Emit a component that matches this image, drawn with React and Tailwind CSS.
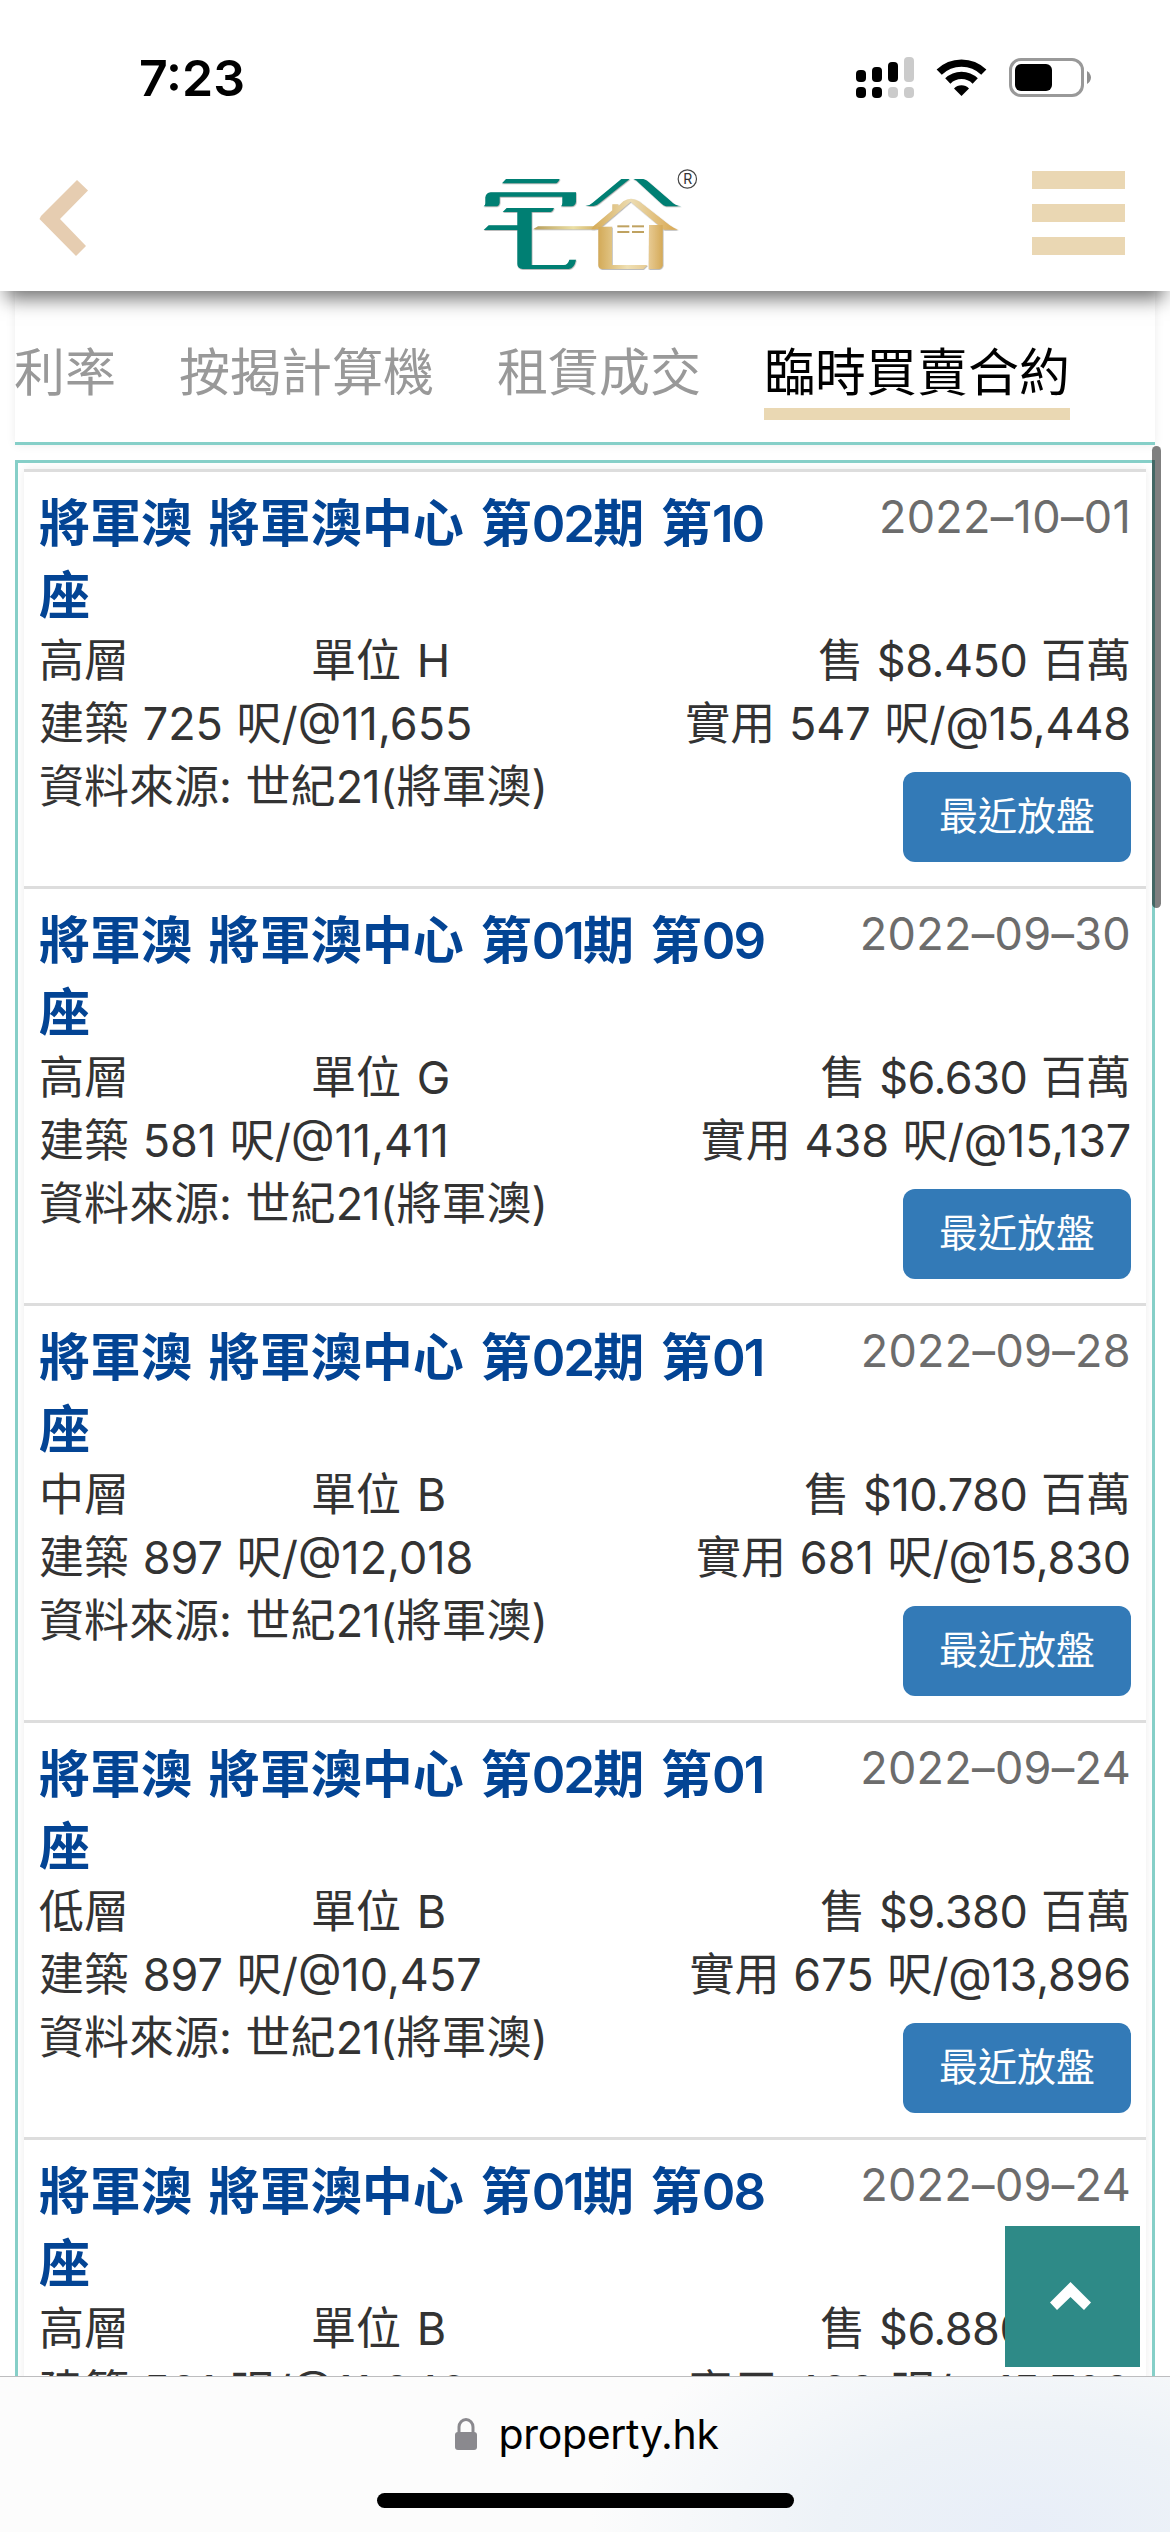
import React from "react";

const tabs = ["利率", "按揭計算機", "租賃成交", "臨時買賣合約"];

const records = [
    { phase: "02", block: "10", date: "2022–10–01", floor: "高層", unit: "H", price: "8.450", gross: "725", grossRate: "11,655", net: "547", netRate: "15,448" },
    { phase: "01", block: "09", date: "2022–09–30", floor: "高層", unit: "G", price: "6.630", gross: "581", grossRate: "11,411", net: "438", netRate: "15,137" },
    { phase: "02", block: "01", date: "2022–09–28", floor: "中層", unit: "B", price: "10.780", gross: "897", grossRate: "12,018", net: "681", netRate: "15,830" },
    { phase: "02", block: "01", date: "2022–09–24", floor: "低層", unit: "B", price: "9.380", gross: "897", grossRate: "10,457", net: "675", netRate: "13,896" },
    { phase: "01", block: "08", date: "2022–09–24", floor: "高層", unit: "B", price: "6.880", gross: "581", grossRate: "11,842", net: "438", netRate: "15,708" },
];

function StatusBar() {
    return (
        <div className="flex h-[150px] items-start justify-between pl-[139px] pr-[79px]">
            <span className="mt-[48px] text-[50px] leading-[60px] font-semibold text-black">7:23</span>
            <div className="mt-[57px] flex items-start">
                <svg width="58" height="41" viewBox="0 0 58 41">
                    <rect x="0" y="13" width="10" height="12" rx="4" fill="#000" />
                    <rect x="16" y="10" width="10" height="15" rx="4" fill="#000" />
                    <rect x="32" y="5" width="10" height="20" rx="4" fill="#000" />
                    <rect x="48" y="0" width="10" height="25" rx="4" fill="#cbcbcb" />
                    <rect x="0" y="30" width="10" height="11" rx="4" fill="#000" />
                    <rect x="16" y="30" width="10" height="11" rx="4" fill="#000" />
                    <rect x="32" y="30" width="10" height="11" rx="4" fill="#cbcbcb" />
                    <rect x="48" y="30" width="10" height="11" rx="4" fill="#cbcbcb" />
                </svg>
                <svg className="mt-[2px] ml-[22px]" width="51" height="37" viewBox="0 0 51 37">
                    <path d="M3.2 13.2 A32 32 0 0 1 47.8 13.2" fill="none" stroke="#000" strokeWidth="7.4" />
                    <path d="M11.8 22 A19.5 19.5 0 0 1 39.2 22" fill="none" stroke="#000" strokeWidth="7.4" />
                    <path d="M18 29.5 A10.5 10.5 0 0 1 33 29.5 L25.5 37 Z" fill="#000" />
                </svg>
                <svg className="mt-[1px] ml-[22px]" width="82" height="39" viewBox="0 0 82 39">
                    <rect x="1.5" y="1.5" width="72" height="36" rx="10.5" fill="none" stroke="#999" strokeWidth="3" />
                    <rect x="6" y="6" width="37" height="27" rx="6" fill="#000" />
                    <path d="M78 13 C80.5 14.5 82 17 82 19.5 C82 22 80.5 24.5 78 26 Z" fill="#8f8f8f" />
                </svg>
            </div>
        </div>
    );
}

function Logo() {
    return (
        <svg width="260" height="140" viewBox="0 0 780 420">
            <defs>
                <linearGradient id="roof" x1="400" y1="0" x2="650" y2="0" gradientUnits="userSpaceOnUse">
                    <stop offset="0" stopColor="#d6ac58" />
                    <stop offset="0.45" stopColor="#ecdcb2" />
                    <stop offset="1" stopColor="#d9a851" />
                </linearGradient>
                <linearGradient id="beam" x1="220" y1="0" x2="420" y2="0" gradientUnits="userSpaceOnUse">
                    <stop offset="0" stopColor="#b79c58" />
                    <stop offset="0.6" stopColor="#ece0a4" />
                    <stop offset="1" stopColor="#cfaa5a" />
                </linearGradient>
                <linearGradient id="wall" x1="415" y1="0" x2="608" y2="0" gradientUnits="userSpaceOnUse">
                    <stop offset="0" stopColor="#d3aa58" />
                    <stop offset="0.45" stopColor="#efe0b4" />
                    <stop offset="0.8" stopColor="#e6c88f" />
                    <stop offset="1" stopColor="#d5aa58" />
                </linearGradient>
                <filter id="edge" x="-5%" y="-5%" width="110%" height="110%">
                    <feDropShadow dx="1.5" dy="2" stdDeviation="1.2" floodColor="#333" floodOpacity="0.5" />
                </filter>
            </defs>
            <g fill="#007f73" filter="url(#edge)">
                <path d="M138 87 H299 Q294 99 287 100 H126 Z" />
                <path d="M92 127 H348 V155 Q346 168 334 169 H303 Q307 165 307 158 V140 H119 V158 Q118 169 106 169 H71 Q76 166 76 160 V142 Q78 129 92 127 Z" />
                <path d="M140 174 H282 Q278 185 272 186 H215 V345 H312 Q324 344 328 329 H348 Q343 355 326 357 H188 Q172 355 172 342 V240 H71 L86 226 H172 V186 H128 Z" />
                <path d="M484 87 H509 L418 160 Q410 168 400 168 H376 Q390 166 397 159 Z" />
                <path d="M520 87 H550 Q560 90 566 96 L633 154 Q645 167 664 169 H618 Q610 167 603 160 L536 98 Q530 90 520 87 Z" />
            </g>
            <g filter="url(#edge)">
                <path d="M234 229 H412 L405 238 H219 Z" fill="url(#beam)" />
                <path d="M400 229 L457 181 V163 H475 V168 L490 154 Q512 138 537 154 L628 225 Q640 234 654 239 H612 L512 155 L421 233 Q415 238 405 238 H394 Z" fill="url(#roof)" />
                <path d="M415 230 H456 V345 H562 L550 357 H426 Q415 355 415 346 Z" fill="url(#wall)" />
                <path d="M567 225 H608 V346 Q606 357 595 357 H566 Z" fill="url(#wall)" />
            </g>
            <g fill="#bfa260">
                <rect x="472" y="226" width="36" height="6" />
                <rect x="516" y="226" width="36" height="6" />
                <rect x="472" y="243" width="36" height="6" />
                <rect x="516" y="243" width="36" height="6" />
            </g>
            <circle cx="682" cy="87" r="27.5" fill="none" stroke="#444" strokeWidth="3.5" />
            <text x="683" y="102" textAnchor="middle" fontSize="42" fill="#333">R</text>
        </svg>
    );
}

function Header() {
    return (
        <header className="relative z-10 h-[291px] shrink-0 bg-white shadow-[0_14px_18px_-6px_rgba(0,0,0,0.55)]">
            <StatusBar />
            <div className="flex items-start justify-between pl-[39px] pr-[45px]">
                <svg className="mt-[30px]" width="50" height="77" viewBox="0 0 50 77">
                    <path d="M38 0 L49 10.5 L21 39 L47 66 L37 76 L0.5 39 L2 36 Z" fill="#e6cdb1" />
                </svg>
                <div className="-mr-[59px] h-[140px]">
                    <Logo />
                </div>
                <div className="mt-[21px] flex w-[93px] flex-col gap-[15px]">
                    <div className="h-[18px] bg-[#ead7b3]"></div>
                    <div className="h-[18px] bg-[#ead7b3]"></div>
                    <div className="h-[18px] bg-[#ead7b3]"></div>
                </div>
            </div>
        </header>
    );
}

function Tabs() {
    return (
        <nav className="mx-[15px] h-[154px] shrink-0 border-b-[3px] border-[#86cfc8] bg-white shadow-[0_0_9px_rgba(0,0,0,0.08)]">
            <div className="-ml-[1px] flex gap-[63px] pt-[46px]">
                {tabs.map((tab) => (
                    <div
                        key={tab}
                        className={
                            tab === "臨時買賣合約"
                                ? "h-[83px] border-b-[12px] border-[#ead8b3] text-[51px] leading-[72px] whitespace-nowrap text-black"
                                : "text-[51px] leading-[72px] whitespace-nowrap text-[#999]"
                        }
                    >
                        {tab}
                    </div>
                ))}
            </div>
        </nav>
    );
}

function Record({ item }) {
    return (
        <div className="h-[417px] shrink-0 border-t-[3px] border-[#ddd] px-[15px] pt-[15px] text-[45px] leading-[63px] text-[#333]">
            <div className="flex h-[142px] justify-between">
                <h2 className="w-[740px] pt-[1px] text-[51px] leading-[72px] font-semibold text-[#034494] [word-spacing:4px]">
                    將軍澳 將軍澳中心 第<span className="tracking-[-2px]">{item.phase}</span>期 第<span className="tracking-[-2px]">{item.block}</span>
                    <br />座
                </h2>
                <span className="-mt-[2px] tracking-[0.3px] whitespace-nowrap text-[#6c6c6c]">{item.date}</span>
            </div>
            <div className="flex justify-between">
                <div className="flex [word-spacing:3px]">
                    <span className="w-[272px]">{item.floor}</span>
                    <span>單位 {item.unit}</span>
                </div>
                <span className="[word-spacing:1px]">
                    售 <span className="tracking-[-0.5px]">${item.price}</span> 百萬
                </span>
            </div>
            <div className="flex justify-between [word-spacing:1px]">
                <span>建築 {item.gross} 呎/@{item.grossRate}</span>
                <span>實用 {item.net} 呎<span className="tracking-[-0.2px]">/@{item.netRate}</span></span>
            </div>
            <div className="flex items-start justify-between [word-spacing:1px]">
                <span>資料來源: 世紀<span className="tracking-[-0.7px]">21</span>(將軍澳)</span>
                <button className="mt-[17px] h-[90px] w-[228px] rounded-[12px] bg-[#337ab7] pb-[3px] text-[39px] leading-[84px] text-white">最近放盤</button>
            </div>
        </div>
    );
}

function BrowserBar() {
    return (
        <footer className="relative z-20 flex h-[156px] shrink-0 flex-col items-center border-t border-[#bdbdbf] bg-[#fbfbfb] bg-[radial-gradient(ellipse_440px_230px_at_1030px_150px,#e8eef8_0%,#edf2f7_45%,#fcfcfc_100%)]">
            <div className="mt-[21px] ml-[4px] flex h-[72px] items-center">
                <svg className="mr-[21px]" width="22" height="33" viewBox="0 0 22 33">
                    <path d="M4 16 V9 A7 7.5 0 0 1 18 9 V16" fill="none" stroke="#8a898e" strokeWidth="3" />
                    <rect x="0" y="14" width="22" height="18" rx="3" fill="#8a898e" />
                </svg>
                <span className="text-[41px] leading-[72px] tracking-[-0.3px] text-black">property.hk</span>
            </div>
            <div className="mt-[23px] h-[15px] w-[417px] rounded-full bg-black"></div>
        </footer>
    );
}

export default function App() {
    return (
        <div className="relative flex h-[2532px] w-[1170px] flex-col overflow-hidden bg-white font-['Inter','Noto_Sans_CJK_TC',sans-serif]">
            <Header />
            <Tabs />
            <main className="mx-[15px] mt-[15px] flex min-h-0 flex-1 flex-col overflow-hidden border-x-[3px] border-t-[3px] border-[#86cfc8] px-[6px] pt-[6px]">
                <div className="flex flex-col shadow-[0_0_9px_rgba(0,0,0,0.08)]">
                    {records.map((item, i) => (
                        <Record key={i} item={item} />
                    ))}
                </div>
            </main>
            <BrowserBar />

            {/* Scrollbar thumb */}
            <div className="absolute top-[446px] left-[1152px] h-[462px] w-[9px] rounded-full bg-black/50"></div>

            {/* Back to top */}
            <button className="absolute top-[2226px] left-[1005px] flex h-[141px] w-[135px] justify-center bg-[#2e8a87] pt-[56px] pr-[4px]">
                <svg width="41" height="28" viewBox="0 0 41 28">
                    <path d="M20.5 0 L41 20.5 L34 28 L20.5 15 L7 28 L0 20.5 Z" fill="#fff" />
                </svg>
            </button>
        </div>
    );
}
